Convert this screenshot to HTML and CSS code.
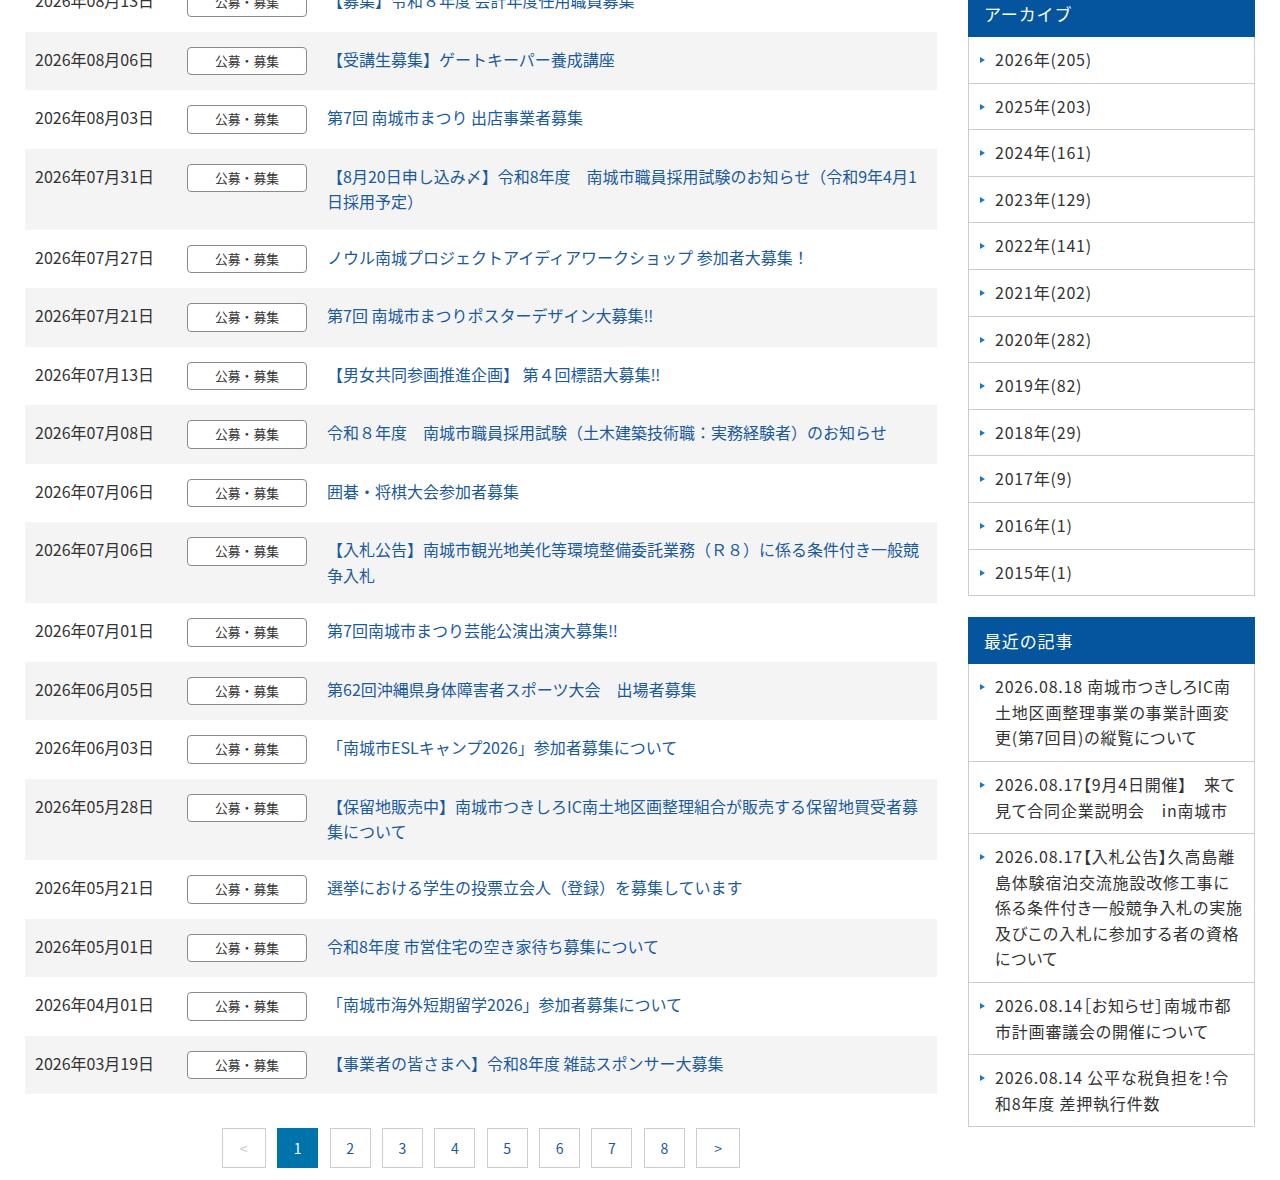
FILE: index.html
```html
<!DOCTYPE html>
<html lang="ja">
<head>
<meta charset="utf-8">
<title>公募・募集 | 南城市</title>
<link rel="stylesheet" href="styles.css">
</head>
<body>
<div class="layout">
  <main class="main">
    <ul class="news">
      <li class="news-row"><span class="news-date">2026年08月13日</span><span class="news-tag">公募・募集</span><a class="news-title" href="#">【募集】令和８年度 会計年度任用職員募集</a></li>
      <li class="news-row"><span class="news-date">2026年08月06日</span><span class="news-tag">公募・募集</span><a class="news-title" href="#">【受講生募集】ゲートキーパー養成講座</a></li>
      <li class="news-row"><span class="news-date">2026年08月03日</span><span class="news-tag">公募・募集</span><a class="news-title" href="#">第7回 南城市まつり 出店事業者募集</a></li>
      <li class="news-row"><span class="news-date">2026年07月31日</span><span class="news-tag">公募・募集</span><a class="news-title" href="#">【8月20日申し込み〆】令和8年度　南城市職員採用試験のお知らせ（令和9年4月1日採用予定）</a></li>
      <li class="news-row"><span class="news-date">2026年07月27日</span><span class="news-tag">公募・募集</span><a class="news-title" href="#">ノウル南城プロジェクトアイディアワークショップ 参加者大募集！</a></li>
      <li class="news-row"><span class="news-date">2026年07月21日</span><span class="news-tag">公募・募集</span><a class="news-title" href="#">第7回 南城市まつりポスターデザイン大募集‼</a></li>
      <li class="news-row"><span class="news-date">2026年07月13日</span><span class="news-tag">公募・募集</span><a class="news-title" href="#">【男女共同参画推進企画】 第４回標語大募集‼</a></li>
      <li class="news-row"><span class="news-date">2026年07月08日</span><span class="news-tag">公募・募集</span><a class="news-title" href="#">令和８年度　南城市職員採用試験（土木建築技術職：実務経験者）のお知らせ</a></li>
      <li class="news-row"><span class="news-date">2026年07月06日</span><span class="news-tag">公募・募集</span><a class="news-title" href="#">囲碁・将棋大会参加者募集</a></li>
      <li class="news-row"><span class="news-date">2026年07月06日</span><span class="news-tag">公募・募集</span><a class="news-title" href="#">【入札公告】南城市観光地美化等環境整備委託業務（Ｒ８）に係る条件付き一般競争入札</a></li>
      <li class="news-row"><span class="news-date">2026年07月01日</span><span class="news-tag">公募・募集</span><a class="news-title" href="#">第7回南城市まつり芸能公演出演大募集‼</a></li>
      <li class="news-row"><span class="news-date">2026年06月05日</span><span class="news-tag">公募・募集</span><a class="news-title" href="#">第62回沖縄県身体障害者スポーツ大会　出場者募集</a></li>
      <li class="news-row"><span class="news-date">2026年06月03日</span><span class="news-tag">公募・募集</span><a class="news-title" href="#">「南城市ESLキャンプ2026」参加者募集について</a></li>
      <li class="news-row"><span class="news-date">2026年05月28日</span><span class="news-tag">公募・募集</span><a class="news-title" href="#">【保留地販売中】南城市つきしろIC南土地区画整理組合が販売する保留地買受者募集について</a></li>
      <li class="news-row"><span class="news-date">2026年05月21日</span><span class="news-tag">公募・募集</span><a class="news-title" href="#">選挙における学生の投票立会人（登録）を募集しています</a></li>
      <li class="news-row"><span class="news-date">2026年05月01日</span><span class="news-tag">公募・募集</span><a class="news-title" href="#">令和8年度 市営住宅の空き家待ち募集について</a></li>
      <li class="news-row"><span class="news-date">2026年04月01日</span><span class="news-tag">公募・募集</span><a class="news-title" href="#">「南城市海外短期留学2026」参加者募集について</a></li>
      <li class="news-row"><span class="news-date">2026年03月19日</span><span class="news-tag">公募・募集</span><a class="news-title" href="#">【事業者の皆さまへ】令和8年度 雑誌スポンサー大募集</a></li>
    </ul>
    <nav class="pager">
      <span class="pager-item pager-arrow is-disabled">&lt;</span>
      <span class="pager-item is-current">1</span>
      <a class="pager-item" href="#">2</a>
      <a class="pager-item" href="#">3</a>
      <a class="pager-item" href="#">4</a>
      <a class="pager-item" href="#">5</a>
      <a class="pager-item" href="#">6</a>
      <a class="pager-item" href="#">7</a>
      <a class="pager-item" href="#">8</a>
      <a class="pager-item pager-arrow" href="#">&gt;</a>
    </nav>
  </main>
  <aside class="side">
    <section class="widget">
      <h2 class="widget-title">アーカイブ</h2>
      <ul class="widget-list">
        <li class="widget-item"><a href="#">2026年(205)</a></li>
        <li class="widget-item"><a href="#">2025年(203)</a></li>
        <li class="widget-item"><a href="#">2024年(161)</a></li>
        <li class="widget-item"><a href="#">2023年(129)</a></li>
        <li class="widget-item"><a href="#">2022年(141)</a></li>
        <li class="widget-item"><a href="#">2021年(202)</a></li>
        <li class="widget-item"><a href="#">2020年(282)</a></li>
        <li class="widget-item"><a href="#">2019年(82)</a></li>
        <li class="widget-item"><a href="#">2018年(29)</a></li>
        <li class="widget-item"><a href="#">2017年(9)</a></li>
        <li class="widget-item"><a href="#">2016年(1)</a></li>
        <li class="widget-item"><a href="#">2015年(1)</a></li>
      </ul>
    </section>
    <section class="widget">
      <h2 class="widget-title">最近の記事</h2>
      <ul class="widget-list">
        <li class="widget-item"><a href="#">2026.08.18 南城市つきしろIC南土地区画整理事業の事業計画変更(第7回目)の縦覧について</a></li>
        <li class="widget-item"><a href="#">2026.08.17【9月4日開催】　来て見て合同企業説明会　in南城市</a></li>
        <li class="widget-item"><a href="#">2026.08.17【入札公告】久高島離島体験宿泊交流施設改修工事に係る条件付き一般競争入札の実施及びこの入札に参加する者の資格について</a></li>
        <li class="widget-item"><a href="#">2026.08.14［お知らせ］南城市都市計画審議会の開催について</a></li>
        <li class="widget-item"><a href="#">2026.08.14 公平な税負担を！令和8年度 差押執行件数</a></li>
      </ul>
    </section>
  </aside>
</div>
</body>
</html>
```

FILE: styles.css
```css
* { box-sizing: border-box; }

html, body {
  margin: 0;
  padding: 0;
  background: #fff;
}

body {
  font-family: "Noto Sans CJK JP", "Noto Sans", sans-serif;
  color: #333;
  font-size: 16px;
  line-height: 1.6;
  overflow: hidden;
}

a { text-decoration: none; }

ul { list-style: none; margin: 0; padding: 0; }

.layout {
  display: flex;
  align-items: flex-start;
  gap: 31px;
  padding: 0 25px;
  margin-top: -27px;
}

.main {
  width: 912px;
  flex: none;
}

.news-row {
  display: flex;
  align-items: flex-start;
  padding: 15px 12px 15px 10px;
}

.news-row:nth-child(even) {
  background: #f4f4f4;
}

.news-date {
  flex: none;
  width: 152px;
  color: #333;
  font-size: 16px;
}

.news-tag {
  flex: none;
  width: 120px;
  height: 28.5px;
  margin-right: 20px;
  border: 1px solid #8a8a8a;
  border-radius: 4px;
  background: #fff;
  color: #333;
  font-size: 12.8px;
  line-height: 26px;
  text-align: center;
}

.news-title {
  flex: 1;
  min-width: 0;
  color: #1a5a9e;
  font-size: 16px;
}

.pager {
  display: flex;
  justify-content: center;
  gap: 11.4px;
  margin-top: 34px;
}

.pager-item {
  display: flex;
  align-items: center;
  justify-content: center;
  width: 41px;
  height: 40px;
  border: 1px solid #cccccc;
  color: #1a5a9e;
  font-size: 14px;
  background: #fff;
}

.pager-arrow { width: 44px; }

.pager-item.is-disabled { color: #c4c4c4; }

.pager-item.is-current {
  background: #0073aa;
  border-color: #0073aa;
  color: #fff;
}

.side {
  width: 287px;
  flex: none;
  margin-top: 17px;
  display: flex;
  flex-direction: column;
  gap: 21px;
}

.widget-title {
  margin: 0;
  height: 47px;
  padding: 0 16px;
  background: #04559d;
  color: #fff;
  font-size: 17px;
  font-weight: 400;
  letter-spacing: 0.05em;
  line-height: 47px;
}

.widget-list {
  border-left: 1px solid #cccccc;
  border-right: 1px solid #cccccc;
}

.widget-item {
  position: relative;
  padding: 10px 10px 10px 26px;
  border-bottom: 1px solid #cccccc;
  font-size: 16px;
  letter-spacing: 0.05em;
  font-feature-settings: "palt";
}

.widget-item::before {
  content: "";
  position: absolute;
  left: 11px;
  top: 20px;
  border-left: 5px solid #1a7bc4;
  border-top: 3px solid transparent;
  border-bottom: 3px solid transparent;
}

.widget-item a { color: #333; }
```
